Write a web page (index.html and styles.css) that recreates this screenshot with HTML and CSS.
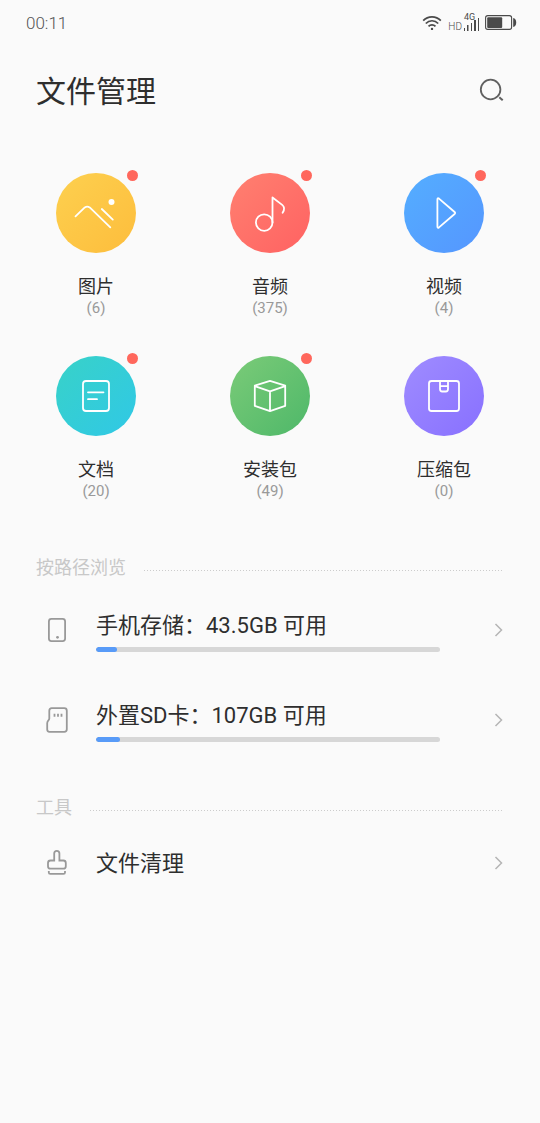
FILE: index.html
```html
<!DOCTYPE html>
<html lang="zh-CN">
<head>
<meta charset="utf-8">
<meta name="viewport" content="width=device-width, initial-scale=1">
<title>文件管理</title>
<link rel="stylesheet" href="styles.css">
</head>
<body>
<div class="status">
  <time class="clock">00:11</time>
  <div class="indicators">
    <svg class="wifi" width="20" height="16" viewBox="0 0 20 16" aria-hidden="true">
      <g fill="none" stroke="#4a4a4a" stroke-width="1.7">
        <path d="M1.2 5.6C6 .5 14 .5 18.8 5.6"/>
        <path d="M3.8 8.5c3.4-3.7 9-3.7 12.4 0"/>
        <path d="M6.5 11.4c2-2.1 5-2.1 7 0"/>
      </g>
      <circle cx="10" cy="13.9" r="1.2" fill="#4a4a4a"/>
    </svg>
    <span class="hd">HD</span>
    <span class="cell">
      <svg width="16" height="14" viewBox="0 0 16 14" fill="#4a4a4a" aria-hidden="true">
        <path d="M0 11h1v3H0zM3 8h1.500v6H3zM7 6h1v8H7zM10 3h2v11h-2zM14 1h1v13h-1z"/>
      </svg>
      <span class="net">4G</span>
    </span>
    <svg class="battery" width="32" height="16" viewBox="0 0 32 16" aria-hidden="true">
      <rect x=".6" y=".6" width="26" height="13.8" rx="2.2" fill="none" stroke="#4a4a4a" stroke-width="1.1"/>
      <rect x="2.2" y="2.2" width="15" height="10.8" rx="1" fill="#4a4a4a"/>
      <path d="M28.200 3c2 .2 3 2 3 4.500s-1 4.300-3 4.500z" fill="#4a4a4a"/>
    </svg>
  </div>
</div>

<header class="header">
  <h1 class="title">文件管理</h1>
  <button class="search" type="button" aria-label="搜索">
    <svg width="26" height="26" viewBox="0 0 26 26" fill="none" stroke="#606060" stroke-width="1.800">
      <circle cx="11.600" cy="11.500" r="9.800"/>
      <path d="M20.300 19.300l3.400 3" stroke-width="2"/>
    </svg>
  </button>
</header>

<main>
  <nav class="grid" aria-label="分类">
    <button class="tile" type="button">
      <span class="disc images"><svg class="glyph" viewBox="0 0 80 80"><path d="M19.500 43.300l9.300-8.900q2.400-1.600 4.900 0L54.300 54.300M45.800 36l11 10.600"/><circle cx="55.500" cy="29" r="3" fill="#fff" stroke="none"/></svg><i class="dot"></i></span>
      <span class="name">图片</span><span class="count">(6)</span>
    </button>
    <button class="tile" type="button">
      <span class="disc audio"><svg class="glyph" viewBox="0 0 80 80"><circle cx="34.200" cy="49.600" r="8.300"/><path d="M42.500 49.600V24.500l9.700 7.400q3.600 3 .4 7.900"/></svg><i class="dot"></i></span>
      <span class="name">音频</span><span class="count">(375)</span>
    </button>
    <button class="tile" type="button">
      <span class="disc video"><svg class="glyph" viewBox="0 0 80 80"><path d="M33.400 26.400v27.200q0 1.900 1.600.8L50.600 41q1.100-1 0-2L35 25.600q-1.600-1.100-1.600.8z"/></svg><i class="dot"></i></span>
      <span class="name">视频</span><span class="count">(4)</span>
    </button>
    <button class="tile" type="button">
      <span class="disc docs"><svg class="glyph" viewBox="0 0 80 80"><rect x="27" y="25" width="26" height="30" rx="3"/><path d="M32 36.300h15.500M32 43.200h9"/></svg><i class="dot"></i></span>
      <span class="name">文档</span><span class="count">(20)</span>
    </button>
    <button class="tile" type="button">
      <span class="disc apps"><svg class="glyph" viewBox="0 0 80 80"><path d="M40 24.900l15.200 4.700v20.300L40 55.100l-15.200-5.200V29.600zM24.800 30.200L40 35.400l15.200-5.200M40 35.400v19.400"/></svg><i class="dot"></i></span>
      <span class="name">安装包</span><span class="count">(49)</span>
    </button>
    <button class="tile" type="button">
      <span class="disc zips"><svg class="glyph" viewBox="0 0 80 80"><rect x="25" y="25" width="30" height="30" rx="2.500"/><path d="M36 25v8q0 2.500 2.200 2.500h3.600q2.200 0 2.200-2.500v-8M36 30.200h8"/></svg></span>
      <span class="name">压缩包</span><span class="count">(0)</span>
    </button>
  </nav>

  <section>
    <h2 class="heading">按路径浏览</h2>
    <button class="row" type="button">
      <svg class="icon" viewBox="0 0 24 28"><rect x="3.900" y="2.900" width="16.200" height="22.200" rx="2.500"/><circle cx="12.500" cy="21.300" r="1.400" fill="#999" stroke="none"/></svg>
      <span class="body">
        <label class="text" for="phone">手机存储：43.5GB 可用</label>
        <progress class="bar" id="phone" value="6" max="100"></progress>
      </span>
      <svg class="chevron" viewBox="0 0 10 14"><path d="M1.500 1l6 6-6 6"/></svg>
    </button>
    <button class="row" type="button">
      <svg class="icon" viewBox="0 0 24 28"><path d="M6.700 2.200h12.600q2.500 0 2.500 2.500v18.600q0 2.500-2.500 2.500H4.400q-2.200 0-2.200-2.200v-6.400c0-2.700 2.100-2.800 2.100-4.600V4.700q0-2.500 2.400-2.500z"/><path d="M9.500 7.700v3M13 7.700v3M16.500 7.700v3"/></svg>
      <span class="body">
        <label class="text" for="card">外置SD卡：107GB 可用</label>
        <progress class="bar" id="card" value="7" max="100"></progress>
      </span>
      <svg class="chevron" viewBox="0 0 10 14"><path d="M1.500 1l6 6-6 6"/></svg>
    </button>
  </section>

  <section>
    <h2 class="heading">工具</h2>
    <button class="row short" type="button">
      <svg class="icon" viewBox="0 0 24 28"><path d="M9.200 11.500V4.500q0-2.600 2.600-2.600t2.600 2.600v7h3.900q2.500 0 2.500 2.500v3.200q0 2.500-2.500 2.500H5.500Q3 19.700 3 17.200V14q0-2.500 2.500-2.500h3.700zM3.800 22v1.400q0 1.500 1.500 1.500h13.200q1.500 0 1.500-1.500V22"/></svg>
      <span class="body"><span class="text">文件清理</span></span>
      <svg class="chevron" viewBox="0 0 10 14"><path d="M1.500 1l6 6-6 6"/></svg>
    </button>
  </section>
</main>
</body>
</html>
```
FILE: styles.css
```css
* {
  box-sizing: border-box;
}

body {
  margin: 0;
  background: #fafafa;
  color: #2e2e2e;
  font-family: Roboto, "Noto Sans CJK SC", sans-serif;
}

button {
  margin: 0;
  padding: 0;
  border: 0;
  background: none;
  color: inherit;
  font: inherit;
  cursor: pointer;
}

svg {
  display: block;
  flex: none;
}

.status {
  display: flex;
  align-items: center;
  justify-content: space-between;
  height: 46px;
  padding: 0 23px 0 26px;
  color: #4a4a4a;
}

.clock {
  color: #555;
  font-size: 17px;
  font-weight: 300;
  line-height: 20px;
}

.indicators {
  display: flex;
  align-items: flex-end;
  height: 16px;
}

.wifi {
  margin-right: 6px;
}

.hd {
  margin-right: 2px;
  font-size: 10px;
  font-weight: 300;
  line-height: 9px;
}

.cell {
  position: relative;
  margin-right: 5px;
}

.net {
  position: absolute;
  top: -4px;
  left: 0;
  font-size: 9px;
  line-height: 9px;
}

.header {
  display: flex;
  align-items: center;
  justify-content: space-between;
  height: 90px;
  padding: 0 35px 0 36px;
}

.title {
  margin: 0;
  padding-top: 2px;
  font-size: 30px;
  font-weight: 400;
  line-height: 44px;
}

.grid {
  display: grid;
  grid-template-columns: repeat(3, 1fr);
  row-gap: 38px;
  padding: 37px 9px 48px;
}

.tile {
  display: flex;
  flex-direction: column;
  align-items: center;
}

.disc {
  position: relative;
  width: 80px;
  height: 80px;
  margin-bottom: 22px;
  border-radius: 50%;
}

.images {
  background: linear-gradient(135deg, #fdd04f, #fdbd3c);
}

.audio {
  background: linear-gradient(135deg, #ff8070, #ff6262);
}

.video {
  background: linear-gradient(135deg, #54aeff, #5596ff);
}

.docs {
  background: linear-gradient(135deg, #38d2c8, #30c8e6);
}

.apps {
  background: linear-gradient(135deg, #7bcb78, #4eb869);
}

.zips {
  background: linear-gradient(135deg, #9f8cff, #8870ff);
}

.glyph {
  width: 80px;
  height: 80px;
  fill: none;
  stroke: #fff;
  stroke-width: 1.8;
  stroke-linecap: round;
  stroke-linejoin: round;
}

.dot {
  position: absolute;
  top: -3px;
  right: -2px;
  width: 11px;
  height: 11px;
  border-radius: 50%;
  background: #ff675c;
}

.name {
  font-size: 18px;
  line-height: 24px;
}

.count {
  color: #999;
  font-size: 15px;
  line-height: 19px;
}

.heading {
  display: flex;
  align-items: center;
  gap: 18px;
  height: 36px;
  margin: 0;
  padding: 2px 36px 0;
  color: #c8c8c8;
  font-size: 18px;
  font-weight: 400;
  line-height: 26px;
}

.heading::after {
  content: "";
  flex: 1;
  height: 1px;
  margin-top: 4px;
  background: repeating-linear-gradient(90deg, #ccc 0 1px, transparent 1px 3px);
}

.row {
  display: flex;
  align-items: center;
  width: 100%;
  height: 90px;
  padding: 0 36px 0 45px;
  text-align: left;
}

.short {
  height: 76px;
}

section + section {
  margin-top: 24px;
}

.icon {
  width: 24px;
  height: 28px;
  fill: none;
  stroke: #999;
  stroke-width: 1.8;
}

.body {
  display: flex;
  flex: 1;
  flex-direction: column;
  gap: 6px;
  margin: 0 54px 0 27px;
}

.text {
  padding-top: 2px;
  font-size: 22px;
  line-height: 30px;
  cursor: inherit;
}

.bar {
  display: block;
  width: 100%;
  height: 5px;
  border: 0;
  border-radius: 3px;
  overflow: hidden;
  appearance: none;
  background: #d7d7d7;
}

.bar::-webkit-progress-bar {
  background: #d7d7d7;
}

.bar::-webkit-progress-value {
  border-radius: 3px;
  background: #589bf8;
}

.chevron {
  width: 10px;
  height: 14px;
  fill: none;
  stroke: #b5b5b5;
  stroke-width: 1.5;
}
```
